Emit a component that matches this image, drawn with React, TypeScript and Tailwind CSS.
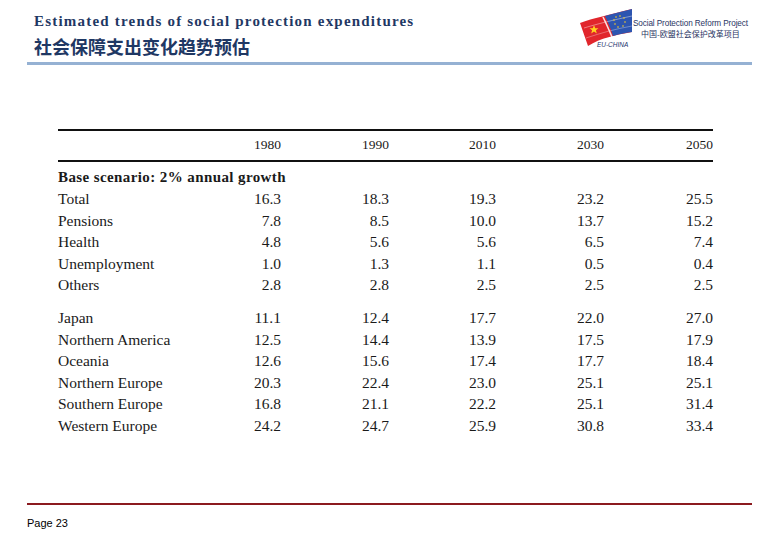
import * as React from "react";

type Row = { label: string; values: string[] };

const years = ["1980", "1990", "2010", "2030", "2050"];

const base: Row[] = [
  { label: "Total", values: ["16.3", "18.3", "19.3", "23.2", "25.5"] },
  { label: "Pensions", values: ["7.8", "8.5", "10.0", "13.7", "15.2"] },
  { label: "Health", values: ["4.8", "5.6", "5.6", "6.5", "7.4"] },
  { label: "Unemployment", values: ["1.0", "1.3", "1.1", "0.5", "0.4"] },
  { label: "Others", values: ["2.8", "2.8", "2.5", "2.5", "2.5"] },
];

const regions: Row[] = [
  { label: "Japan", values: ["11.1", "12.4", "17.7", "22.0", "27.0"] },
  { label: "Northern America", values: ["12.5", "14.4", "13.9", "17.5", "17.9"] },
  { label: "Oceania", values: ["12.6", "15.6", "17.4", "17.7", "18.4"] },
  { label: "Northern Europe", values: ["20.3", "22.4", "23.0", "25.1", "25.1"] },
  { label: "Southern Europe", values: ["16.8", "21.1", "22.2", "25.1", "31.4"] },
  { label: "Western Europe", values: ["24.2", "24.7", "25.9", "30.8", "33.4"] },
];

const grid = "grid grid-cols-[160px_63px_108px_107px_108px_109px] items-center";

function Logo() {
  return (
    <div className="flex items-start">
      <div className="relative w-[54px] h-[42px]">
        <svg width="54" height="40" viewBox="0 0 54 40">
          <path d="M1 16 C14 11 30 8 53 2 L53 25 C36 28 22 31 9 39 Z" fill="#e1262c" />
          <path d="M26 9 C34 7 44 4 53 2 L53 25 C46 26 40 27 34 29 C32 22 29 15 26 9 Z" fill="#2d55b0" />
          <path d="M24 10 C27 16 30 23 33 30" stroke="#ffffff" strokeWidth="1.6" fill="none" opacity="0.85" />
          <path d="M5 21 C18 17 34 13 53 9" stroke="#ffffff" strokeWidth="0.8" fill="none" opacity="0.5" />
          <path d="M7 31 C22 26 36 22 53 19" stroke="#ffffff" strokeWidth="0.7" fill="none" opacity="0.45" />
          <polygon points="15,18 16.2,21.2 19.5,21.3 16.9,23.3 17.8,26.5 15,24.6 12.2,26.5 13.1,23.3 10.5,21.3 13.8,21.2" fill="#ffd21f" />
          <circle cx="37" cy="10" r="0.8" fill="#ffd21f" />
          <circle cx="41" cy="9" r="0.8" fill="#ffd21f" />
          <circle cx="45" cy="11" r="0.8" fill="#ffd21f" />
          <circle cx="46" cy="15" r="0.8" fill="#ffd21f" />
          <circle cx="44" cy="19" r="0.8" fill="#ffd21f" />
          <circle cx="39" cy="20" r="0.8" fill="#ffd21f" />
          <circle cx="36" cy="17" r="0.8" fill="#ffd21f" />
          <circle cx="35" cy="13" r="0.8" fill="#ffd21f" />
        </svg>
        <span className="absolute left-[18px] top-[35px] text-[6.5px] italic leading-none text-[#26346e] font-['Liberation_Sans',sans-serif]">
          EU-CHINA
        </span>
      </div>
      <div className="mt-[13px] flex flex-col items-center font-['Liberation_Sans','Noto_Sans_CJK_SC',sans-serif] text-[#2a3563] leading-none">
        <span className="text-[8.2px] tracking-[-0.1px]">Social Protection Reform Project</span>
        <span className="mt-[3px] text-[8px]">中国-欧盟社会保护改革项目</span>
      </div>
    </div>
  );
}

function DataRow({ row }: { row: Row }) {
  return (
    <div className={`${grid} h-[21.5px] text-[15.5px] leading-none text-[#1a1a1a]`}>
      <span>{row.label}</span>
      {row.values.map((v, i) => (
        <span key={i} className="text-right">
          {v}
        </span>
      ))}
    </div>
  );
}

export default function App() {
  return (
    <div className="w-[780px] h-[540px] bg-white flex flex-col overflow-hidden">
      <header className="flex justify-between pl-[34px] pr-[32px] pt-[11px] h-[62px]">
        <div className="text-[#1f3864] font-bold leading-none">
          <div className="h-[20px] text-[15px] tracking-[1.2px] font-['Liberation_Serif',serif] flex items-center">
            Estimated trends of social protection expenditures
          </div>
          <div className="mt-[4px] h-[22px] text-[18px] font-['Noto_Sans_CJK_SC',sans-serif] flex items-center">
            社会保障支出变化趋势预估
          </div>
        </div>
        <div className="-mt-[4px]">
          <Logo />
        </div>
      </header>
      <div className="ml-[27px] w-[725px] h-[3px] bg-[#95b1d3]" />

      <div className="ml-[58px] w-[655px] mt-[64px] font-['Liberation_Serif',serif]">
        <div className="h-[1.5px] bg-[#111]" />
        <div className={`${grid} h-[29.5px] text-[13.5px] text-[#1a1a1a]`}>
          <span />
          {years.map((y) => (
            <span key={y} className="text-right">
              {y}
            </span>
          ))}
        </div>
        <div className="h-[1.5px] bg-[#111]" />
        <div className="mt-[5px] h-[21.5px] flex items-center text-[15px] tracking-[0.4px] font-bold text-[#1a1a1a] leading-none">
          Base scenario: 2% annual growth
        </div>
        {base.map((r) => (
          <DataRow key={r.label} row={r} />
        ))}
        <div className="h-[11.75px]" />
        {regions.map((r) => (
          <DataRow key={r.label} row={r} />
        ))}
      </div>

      <div className="mt-auto mb-[11px]">
        <div className="ml-[27px] w-[725px] h-[2px] bg-[#8b1a1f]" />
        <div className="ml-[27px] mt-[13px] text-[11px] leading-none text-black font-['Liberation_Sans',sans-serif]">
          Page 23
        </div>
      </div>
    </div>
  );
}
